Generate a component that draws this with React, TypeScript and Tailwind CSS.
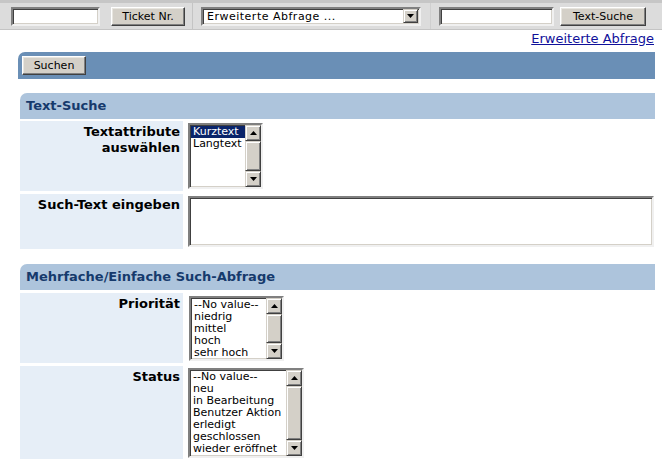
import React from "react";

const btnCls =
  "h-[19px] bg-[#d4d0c8] text-black text-[11px] leading-none flex items-center justify-center border border-t-white border-l-white border-r-[#404040] border-b-[#404040] shadow-[inset_-1px_-1px_0_#808080,inset_1px_1px_0_#e8e6e0]";

const insetCls =
  "bg-white border-2 border-t-[#808080] border-l-[#808080] border-r-[#f0f0f0] border-b-[#f0f0f0] shadow-[inset_1px_1px_0_#404040,inset_-1px_-1px_0_#d4d0c8]";

function Arrow({ up }: { up?: boolean }) {
  return (
    <svg width="7" height="4" viewBox="0 0 7 4">
      {up ? <polygon points="3.5,0 7,4 0,4" fill="#000" /> : <polygon points="0,0 7,0 3.5,4" fill="#000" />}
    </svg>
  );
}

function ScrollBtn({ up }: { up?: boolean }) {
  return (
    <div className="w-[16px] h-[16px] bg-[#d4d0c8] flex items-center justify-center border border-t-[#d4d0c8] border-l-[#d4d0c8] border-r-[#404040] border-b-[#404040] shadow-[inset_1px_1px_0_#fff,inset_-1px_-1px_0_#808080]">
      <Arrow up={up} />
    </div>
  );
}

function ListBox({
  items,
  w,
  h,
  selected,
}: {
  items: string[];
  w: string;
  h: string;
  selected?: number;
}) {
  return (
    <div className={`${insetCls} ${w} ${h} flex`}>
      <div className="flex-1 pt-[1px] pl-[1px] overflow-hidden">
        {items.map((it, i) => (
          <div
            key={it}
            className={`text-[11px] leading-[12px] h-[12px] pl-[2px] whitespace-nowrap ${
              i === selected ? "bg-[#0a246a] text-white" : "text-black"
            }`}
          >
            {it}
          </div>
        ))}
      </div>
      <div className="w-[16px] flex flex-col">
        <ScrollBtn up />
        <div className="flex-1 bg-[#d4d0c8] border border-t-[#d4d0c8] border-l-[#d4d0c8] border-r-[#404040] border-b-[#404040] shadow-[inset_1px_1px_0_#fff,inset_-1px_-1px_0_#808080]" />
        <ScrollBtn />
      </div>
    </div>
  );
}

function SectionHeader({ title }: { title: string }) {
  return (
    <div className="ml-[20px] w-[635px] h-[26px] bg-[#adc4dc] rounded-tl-[7px] flex items-center pl-[6px] text-[13px] font-bold text-[#163a6c]">
      {title}
    </div>
  );
}

function Row({ label, h, children }: { label: React.ReactNode; h: string; children: React.ReactNode }) {
  return (
    <div className={`ml-[20px] flex gap-[4px] ${h}`}>
      <div className="w-[163px] bg-[#e6eef7] text-right pr-[3px] pt-[3px] text-[13px] font-bold leading-[16px] text-black">
        {label}
      </div>
      <div className="flex-1 pt-[2px] pl-[1px]">{children}</div>
    </div>
  );
}

export default function App() {
  return (
    <div
      className="w-[662px] h-[468px] bg-white overflow-hidden"
      style={{ fontFamily: "'DejaVu Sans', Verdana, sans-serif" }}
    >
      {/* top bar */}
      <div className="h-[30px] bg-[#dcdcdc] border-t-[3px] border-t-[#c6c6c6] border-b border-b-[#c4c4c4] flex items-center">
        <div className={`${insetCls} ml-[11px] w-[89px] h-[19px]`} />
        <div className={`${btnCls} ml-[11px] w-[74px]`}>Ticket Nr.</div>
        <div className="ml-[7px] w-px h-[26px] bg-[#c4c4c4]" />
        <div className={`${insetCls} ml-[8px] w-[220px] h-[19px] flex items-center`}>
          <span className="flex-1 text-[11px] tracking-[0.5px] pl-[4px] text-black leading-none">Erweiterte Abfrage ...</span>
          <div className="w-[15px] h-[14px] mr-[1px] bg-[#d4d0c8] flex items-center justify-center border border-t-[#d4d0c8] border-l-[#d4d0c8] border-r-[#404040] border-b-[#404040] shadow-[inset_1px_1px_0_#fff,inset_-1px_-1px_0_#808080]">
            <Arrow />
          </div>
        </div>
        <div className="ml-[9px] w-px h-[26px] bg-[#cfcfcf]" />
        <div className={`${insetCls} ml-[8px] w-[115px] h-[19px]`} />
        <div className={`${btnCls} ml-[6px] w-[86px]`}>Text-Suche</div>
      </div>

      {/* link */}
      <div className="h-[22px] flex justify-end items-start pr-[8px]">
        <a className="text-[13px] leading-[16px] mt-[1px] text-[#10109a] underline">Erweiterte Abfrage</a>
      </div>

      {/* blue bar */}
      <div className="ml-[18px] w-[637px] h-[27px] bg-[#6a8fb6] rounded-tl-[7px] flex items-center pl-[4px]">
        <div className={`${btnCls} w-[64px] h-[19px]`}>Suchen</div>
      </div>

      <div className="h-[14px]" />
      <SectionHeader title="Text-Suche" />
      <div className="h-[2px]" />
      <Row
        h="h-[70px]"
        label={
          <>
            Textattribute
            <br />
            auswählen
          </>
        }
      >
        <ListBox items={["Kurztext", "Langtext"]} w="w-[75px]" h="h-[66px]" selected={0} />
      </Row>
      <div className="h-[3px]" />
      <Row h="h-[55px]" label="Such-Text eingeben">
        <div className={`${insetCls} w-[466px] h-[51px]`} />
      </Row>

      <div className="h-[15px]" />
      <SectionHeader title="Mehrfache/Einfache Such-Abfrage" />
      <div className="h-[3px]" />
      <Row h="h-[70px]" label="Priorität">
        <div className="pt-[1px] pl-[1px]">
          <ListBox
            items={["--No value--", "niedrig", "mittel", "hoch", "sehr hoch"]}
            w="w-[95px]"
            h="h-[65px]"
          />
        </div>
      </Row>
      <div className="h-[3px]" />
      <Row h="h-[93px]" label="Status">
        <ListBox
          items={[
            "--No value--",
            "neu",
            "in Bearbeitung",
            "Benutzer Aktion",
            "erledigt",
            "geschlossen",
            "wieder eröffnet",
          ]}
          w="w-[116px]"
          h="h-[90px]"
        />
      </Row>
    </div>
  );
}
